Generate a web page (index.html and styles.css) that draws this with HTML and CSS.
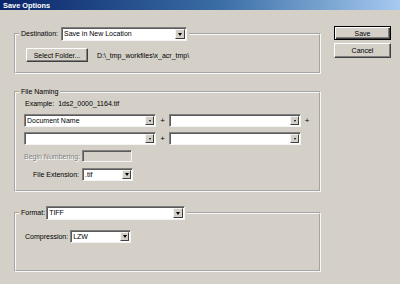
FILE: index.html
```html
<!DOCTYPE html>
<html>
<head>
<meta charset="utf-8">
<link rel="stylesheet" href="styles.css">
</head>
<body>
<div class="titlebar">Save Options</div>
<div class="dialog">
  <div class="groups">
    <fieldset class="group dest">
      <legend class="legend"><span class="lbl">Destination:</span><div class="combo w-dest"><span class="val">Save in New Location</span><span class="drop"></span></div></legend>
      <div class="dest-body">
        <div class="btn folder">Select Folder...</div>
        <span class="path">D:\_tmp_workfiles\x_acr_tmp\</span>
      </div>
    </fieldset>
    <fieldset class="group naming">
      <legend class="legend txt">File Naming</legend>
      <div class="naming-body">
        <div class="example"><span>Example:</span><span>1ds2_0000_1164.tif</span></div>
        <div class="name-grid">
          <div class="combo"><span class="val">Document Name</span><span class="drop small"></span></div>
          <span class="plus">+</span>
          <div class="combo"><span class="val"></span><span class="drop small"></span></div>
          <span class="plus">+</span>
          <div class="combo"><span class="val"></span><span class="drop small"></span></div>
          <span class="plus">+</span>
          <div class="combo"><span class="val"></span><span class="drop small"></span></div>
          <span></span>
        </div>
        <div class="field-grid">
          <span class="flbl disabled">Begin Numbering:</span>
          <div class="input disabled"></div>
          <span class="flbl">File Extension:</span>
          <div class="combo w-ext"><span class="val">.tif</span><span class="drop"></span></div>
        </div>
      </div>
    </fieldset>
    <fieldset class="group format">
      <legend class="legend"><span class="lbl">Format:</span><div class="combo w-format"><span class="val">TIFF</span><span class="drop"></span></div></legend>
      <div class="format-body">
        <span class="clbl">Compression:</span>
        <div class="combo w-comp"><span class="val">LZW</span><span class="drop"></span></div>
      </div>
    </fieldset>
  </div>
  <div class="side">
    <div class="btn default">Save</div>
    <div class="btn cancel">Cancel</div>
  </div>
</div>
</body>
</html>
```
FILE: styles.css
```css
html, body {
  margin: 0;
  padding: 0;
}
body {
  width: 400px;
  height: 284px;
  overflow: hidden;
  background: #d4d0c8;
  color: #000;
  font-family: "Liberation Sans", Arial, sans-serif;
  font-size: 7px;
}
.titlebar {
  height: 10px;
  overflow: hidden;
  background: linear-gradient(to right, #0a246a 0%, #3a6ea5 55%, #a6caf0 100%);
  color: #fff;
  font-weight: bold;
  font-size: 7.4px;
  line-height: 12px;
  padding-left: 3px;
}
.dialog {
  display: flex;
  gap: 13px;
  padding: 16px 0 0 14px;
}
.groups {
  width: 307px;
  display: flex;
  flex-direction: column;
}
.group {
  margin: 0;
  padding: 0;
  min-width: 0;
  border: 2px groove #f8f8f8;
}
.dest { margin-top: 1px; }
.naming { margin-top: 11px; }
.format { margin-top: 14px; }
.legend {
  display: flex;
  align-items: center;
  height: 14px;
  margin-left: 3px;
  padding: 0 2px;
  line-height: 14px;
}
.legend.txt { display: block; }
.lbl { margin-right: 3px; }
.format .lbl { margin-right: 1px; }

.combo {
  display: flex;
  align-items: center;
  box-sizing: border-box;
  height: 13px;
  background: #fff;
  border: 1px solid;
  border-color: #808080 #f4f4f4 #f4f4f4 #808080;
  box-shadow: inset 1px 1px 0 #5a5a5a;
}
.legend .combo { height: 14px; }
.combo .val {
  flex: 1;
  padding-left: 2px;
  white-space: nowrap;
  overflow: hidden;
}
.drop {
  box-sizing: border-box;
  width: 9px;
  height: 9px;
  margin-right: 1px;
  background: #d4d0c8;
  border: 1px solid;
  border-color: #f4f4f4 #404040 #404040 #f4f4f4;
  display: flex;
  align-items: center;
  justify-content: center;
}
.legend .drop { height: 10px; width: 10px; }
.drop::before {
  content: "";
  border-left: 2.5px solid transparent;
  border-right: 2.5px solid transparent;
  border-top: 3px solid #000;
}
.drop.small::before {
  border-left-width: 1.5px;
  border-right-width: 1.5px;
  border-top-width: 2px;
}
.w-dest { width: 126px; }
.w-format { width: 139px; }
.w-ext { width: 51px; }
.w-comp { width: 61px; }

.btn {
  box-sizing: border-box;
  height: 14px;
  display: flex;
  align-items: center;
  justify-content: center;
  background: #d4d0c8;
  border: 1px solid;
  border-color: #fff #404040 #404040 #fff;
  box-shadow: inset -1px -1px 0 #808080;
  white-space: nowrap;
}
.dest-body {
  display: flex;
  align-items: center;
  gap: 9px;
  padding: 7px 0 10px 10px;
}
.folder { width: 62px; }

.naming-body {
  padding: 0 0 9px 8px;
}
.example {
  height: 10px;
  line-height: 10px;
  display: flex;
  gap: 4px;
  padding-left: 1px;
}
.name-grid {
  margin-top: 5px;
  display: grid;
  grid-template-columns: 132px 13px 132px 12px;
  grid-auto-rows: 13px;
  row-gap: 5px;
  align-items: center;
}
.plus {
  text-align: center;
  font-size: 8px;
}
.field-grid {
  margin-top: 5px;
  display: grid;
  grid-template-columns: 55px 51px;
  column-gap: 3px;
  row-gap: 6px;
  align-items: center;
}
.flbl { text-align: right; white-space: nowrap; }
.disabled.flbl {
  color: #808080;
  text-shadow: 1px 1px 0 #fff;
}
.input {
  box-sizing: border-box;
  height: 12px;
  width: 50px;
  border: 1px solid;
  border-color: #808080 #f4f4f4 #f4f4f4 #808080;
  box-shadow: inset 1px 1px 0 #5a5a5a;
}
.input.disabled { background: #d4d0c8; }

.format-body {
  display: flex;
  align-items: center;
  gap: 2px;
  padding: 10px 0 27px 9px;
}

.side {
  display: flex;
  flex-direction: column;
  gap: 3px;
  padding-top: 0;
}
.side .btn {
  width: 57px;
}
.btn.default {
  border: 1px solid #000;
  box-shadow: inset 1px 1px 0 #fff, inset -1px -1px 0 #404040, inset -2px -2px 0 #808080;
}
.btn.cancel { height: 15px; }
```
